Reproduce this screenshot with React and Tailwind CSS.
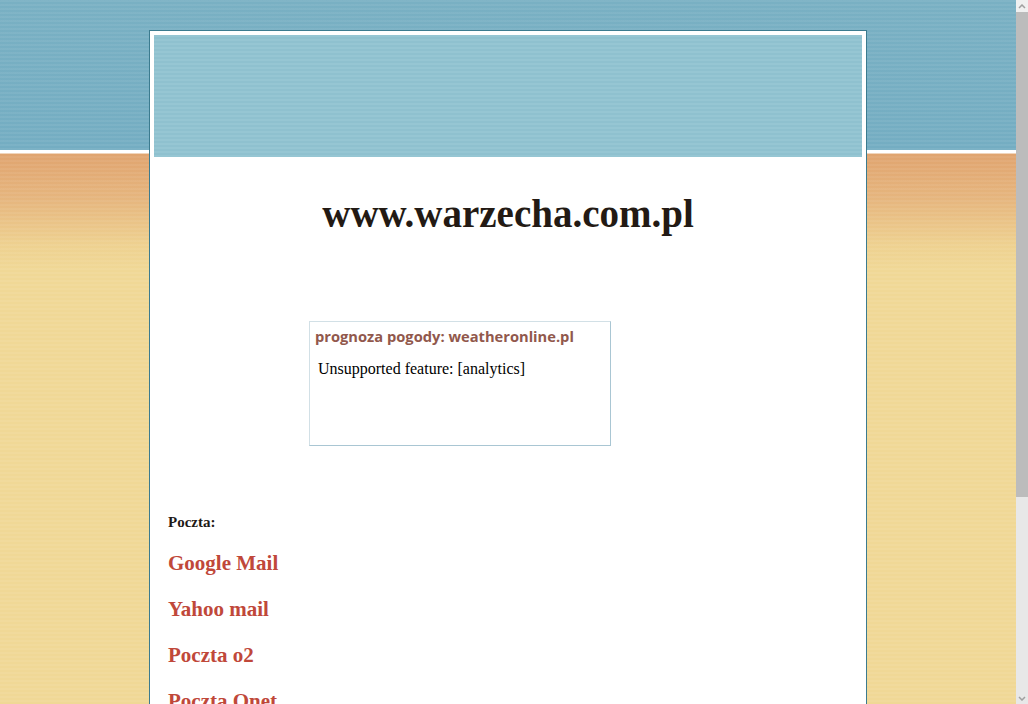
import React from "react";

const links = ["Google Mail", "Yahoo mail", "Poczta o2", "Poczta Onet"];

const Scrollbar = () => (
  <div className="w-[12px] h-full bg-[#e8e8e8] flex flex-col items-center">
    <div className="h-[12px] w-full bg-[#f0f0f0] flex items-center justify-center">
      <svg width="8" height="5" viewBox="0 0 8 5">
        <path d="M1 4 L4 1 L7 4" stroke="#a0a0a0" strokeWidth="1.5" fill="none" />
      </svg>
    </div>
    <div className="w-[12px] h-[485px] bg-[#bcbcbc]" />
    <div className="flex-1" />
    <div className="h-[12px] w-full flex items-center justify-center">
      <svg width="8" height="5" viewBox="0 0 8 5">
        <path d="M1 1 L4 4 L7 1" stroke="#a0a0a0" strokeWidth="1.5" fill="none" />
      </svg>
    </div>
  </div>
);

export default function App() {
  return (
    <div className="w-[1028px] h-[704px] overflow-hidden flex">
      {/* page body with sky / sand background */}
      <div className="w-[1016px] h-full overflow-hidden bg-[repeating-linear-gradient(to_bottom,rgba(255,255,255,0.06)_0px,rgba(255,255,255,0.06)_2px,transparent_2px,transparent_4px),linear-gradient(to_bottom,#79b0c3_0px,#74adc2_150px,#ffffff_150px,#ffffff_153px,#e0a46f_154px,#e6b67e_200px,#eed190_245px,#f0d896_270px,#f0d896_100%)]">
        <div className="ml-[149px] mt-[30px] w-[718px] min-h-[700px] border border-[#3b7b8f] bg-white p-[4px]">
          <div className="h-[122px] bg-[repeating-linear-gradient(to_bottom,#96c6d3_0px,#96c6d3_2px,#8fc1cf_2px,#8fc1cf_4px)]" />

          <h1
            className="mt-[35px] text-center text-[39px] font-bold text-[#231a14] leading-[44px]"
            style={{ fontFamily: '"Liberation Serif", serif' }}
          >
            www.warzecha.com.pl
          </h1>

          <div className="ml-[155px] mt-[85px] w-[302px] h-[125px] border border-[#d2e0e6] border-r-[#a9c6d3] border-b-[#a9c6d3] px-[5px] pt-[4px]">
            <div
              className="text-[14.7px] font-bold text-[#91584c] leading-[20px]"
              style={{ fontFamily: '"Open Sans", sans-serif' }}
            >
              prognoza pogody: weatheronline.pl
            </div>
            <div
              className="mt-[13px] ml-[3px] text-[16px] text-black leading-[20px]"
              style={{ fontFamily: '"Liberation Serif", serif' }}
            >
              Unsupported feature: [analytics]
            </div>
          </div>

          <div className="ml-[14px] mt-[66px]" style={{ fontFamily: '"Liberation Serif", serif' }}>
            <div className="text-[15px] font-bold text-[#1f1a17] leading-[20px]">Poczta:</div>
            <div className="mt-[19px] flex flex-col gap-[22px]">
              {links.map((l) => (
                <a key={l} href="#" className="text-[21px] font-bold text-[#c0483a] leading-[24px]">
                  {l}
                </a>
              ))}
            </div>
          </div>
        </div>
      </div>
      <Scrollbar />
    </div>
  );
}
